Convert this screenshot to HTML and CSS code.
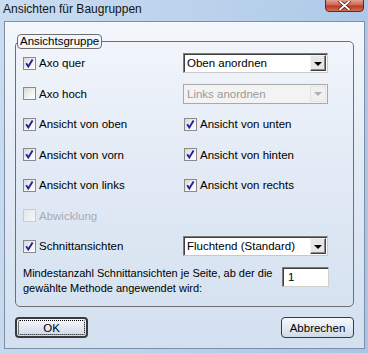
FILE: index.html
```html
<!DOCTYPE html>
<html lang="de">
<head>
  <meta charset="UTF-8" />
  <title>Ansichten für Baugruppen</title>
  <link rel="stylesheet" href="styles.css">
</head>
<body>
  <div class="window">
    <div class="titlebar">
      <span class="title">Ansichten für Baugruppen</span>
      <span class="close-btn">
        <svg width="13" height="9" viewBox="0 0 13 9">
          <path d="M2 0.5 L11 8.5 M11 0.5 L2 8.5" stroke="#5a1a10" stroke-width="3.4" stroke-linecap="round"/>
          <path d="M2 0.5 L11 8.5 M11 0.5 L2 8.5" stroke="#fff" stroke-width="1.8" stroke-linecap="round"/>
        </svg>
      </span>
    </div>

    <div class="client">
      <div class="group">
        <span class="group-title">Ansichtsgruppe</span>

        <div class="grid">
          <label class="check"><span class="box checked"></span>Axo quer</label>
          <div class="select"><span class="select-text">Oben anordnen</span><span class="arrow"></span></div>

          <label class="check"><span class="box"></span>Axo hoch</label>
          <div class="select disabled"><span class="select-text">Links anordnen</span><span class="arrow"></span></div>

          <label class="check"><span class="box checked"></span>Ansicht von oben</label>
          <label class="check right"><span class="box checked"></span>Ansicht von unten</label>

          <label class="check"><span class="box checked"></span>Ansicht von vorn</label>
          <label class="check right"><span class="box checked"></span>Ansicht von hinten</label>

          <label class="check"><span class="box checked"></span>Ansicht von links</label>
          <label class="check right"><span class="box checked"></span>Ansicht von rechts</label>

          <label class="check disabled"><span class="box"></span>Abwicklung</label>
          <div></div>

          <label class="check"><span class="box checked"></span>Schnittansichten</label>
          <div class="select"><span class="select-text">Fluchtend (Standard)</span><span class="arrow"></span></div>
        </div>

        <div class="min-row">
          <p class="min-text">Mindestanzahl Schnittansichten je Seite, ab der die<br>gewählte Methode angewendet wird:</p>
          <div class="num-input">1</div>
        </div>
      </div>

      <div class="buttons">
        <button class="btn default"><span class="focus">OK</span></button>
        <button class="btn">Abbrechen</button>
      </div>
    </div>
  </div>
</body>
</html>
```

FILE: styles.css
```css
* {
  box-sizing: border-box;
}

body {
  margin: 0;
  font-family: 'Liberation Sans', Arial, sans-serif;
  font-size: 11.5px;
  color: #000;
}

.window {
  width: 368px;
  height: 353px;
  background: linear-gradient(100deg, #c9dcf0 0%, #bcd3ec 45%, #a8c5e6 100%);
  display: flex;
  flex-direction: column;
}

.titlebar {
  height: 21px;
  display: flex;
  justify-content: space-between;
  align-items: flex-start;
  padding-left: 3px;
  padding-right: 4px;
}

.title {
  font-size: 12px;
  line-height: 12px;
  margin-top: 3px;
  color: #141414;
}

.close-btn {
  width: 39px;
  height: 13px;
  margin-top: -1px;
  border: 1px solid #6b261b;
  border-radius: 0 0 4px 4px;
  background: linear-gradient(#e3a193 0%, #cf6450 45%, #b93a24 55%, #d0705a 100%);
  display: flex;
  justify-content: center;
  align-items: center;
}

.client {
  flex: 1;
  margin: 0 3px 4px 4px;
  border: 1px solid #7d8ea6;
  background: linear-gradient(#f4f7fc 0%, #e2eaf5 45%, #d3e0f0 100%);
  padding: 12px 10px 0 10px;
}

.group {
  position: relative;
  margin-top: 7px;
  height: 266px;
  border: 1px solid #6f6f6f;
  border-radius: 5px;
  padding: 11px 0 0 7px;
}

.group-title {
  position: absolute;
  top: -8px;
  left: 1px;
  height: 15px;
  line-height: 13px;
  padding: 0 2px 0 2px;
  border: 1px solid #6f6f6f;
  border-radius: 4px;
  background: #f2f6fb;
}

.grid {
  display: grid;
  grid-template-columns: 160px 145px;
  grid-auto-rows: 20px;
  row-gap: 10.5px;
}

.check {
  display: flex;
  align-items: center;
  gap: 3px;
  white-space: nowrap;
}

.check.right {
  margin-left: 1px;
}

.box {
  width: 13px;
  height: 13px;
  border: 1px solid #8a8a8a;
  background: linear-gradient(135deg, #d8d8d8 0%, #f4f4f4 60%, #ffffff 100%);
  display: inline-block;
}

.box.checked {
  background-image: url("data:image/svg+xml,%3Csvg xmlns='http://www.w3.org/2000/svg' width='11' height='11'%3E%3Cpath d='M2.2 5.2 L4.3 8.4 L8.6 1.6' fill='none' stroke='%2321219c' stroke-width='1.9'/%3E%3C/svg%3E"), linear-gradient(135deg, #d8d8d8 0%, #f4f4f4 60%, #ffffff 100%);
}

.check.disabled {
  color: #a7acb4;
}

.check.disabled .box {
  border-color: #c8ccd2;
  background: linear-gradient(135deg, #e4e6e9, #f6f7f8);
}

.select {
  height: 20px;
  border: 1px solid #7b7b7b;
  border-right-color: #c8c8c8;
  border-bottom-color: #c8c8c8;
  background: #fff;
  display: flex;
  align-items: center;
  justify-content: space-between;
  padding: 1px 1px 1px 3px;
  box-shadow: inset 1px 1px 0 #404040;
}

.arrow {
  width: 16px;
  height: 16px;
  background: #e6e6e6;
  border: 1px solid #f4f4f4;
  border-right-color: #404040;
  border-bottom-color: #404040;
  box-shadow: inset -1px -1px 0 #8a8a8a;
  display: flex;
  justify-content: center;
  align-items: center;
}

.arrow::after {
  content: "";
  width: 0;
  height: 0;
  border-left: 4px solid transparent;
  border-right: 4px solid transparent;
  border-top: 4px solid #000;
  margin-top: 1px;
}

.select.disabled {
  background: #f3f3f3;
  border-color: #a9a9a9;
  box-shadow: none;
  color: #9a9a9a;
}

.select.disabled .arrow {
  background: #f0f0f0;
  border-color: #e4e4e4;
  box-shadow: none;
}

.select.disabled .arrow::after {
  border-top-color: #b0b0b0;
}

.min-row {
  display: flex;
  justify-content: space-between;
  align-items: flex-start;
  margin-top: 10px;
  width: 306px;
}

.min-text {
  margin: 0;
  font-size: 11px;
  line-height: 15px;
  white-space: nowrap;
}

.num-input {
  width: 47px;
  height: 20px;
  margin-top: 1px;
  background: #fff;
  border: 1px solid #7b7b7b;
  border-right-color: #d0d0d0;
  border-bottom-color: #d0d0d0;
  box-shadow: inset 1px 1px 0 #404040;
  padding: 3px 0 0 5px;
  line-height: 13px;
}

.buttons {
  display: flex;
  justify-content: space-between;
  margin-top: 10px;
}

.btn {
  width: 73px;
  height: 21px;
  font-family: 'Liberation Sans', Arial, sans-serif;
  font-size: 11.5px;
  color: #000;
  border: 1px solid #3a3a3a;
  border-radius: 4px;
  background: linear-gradient(#f6f8fb 0%, #e3e9f2 50%, #cfd9e7 100%);
  padding: 0;
  display: flex;
  justify-content: center;
  align-items: center;
}

.btn.default {
  border-width: 2px;
  padding: 1px;
}

.focus {
  flex: 1;
  align-self: stretch;
  border: 1px dotted #000;
  border-radius: 2px;
  display: flex;
  justify-content: center;
  align-items: center;
}
```
